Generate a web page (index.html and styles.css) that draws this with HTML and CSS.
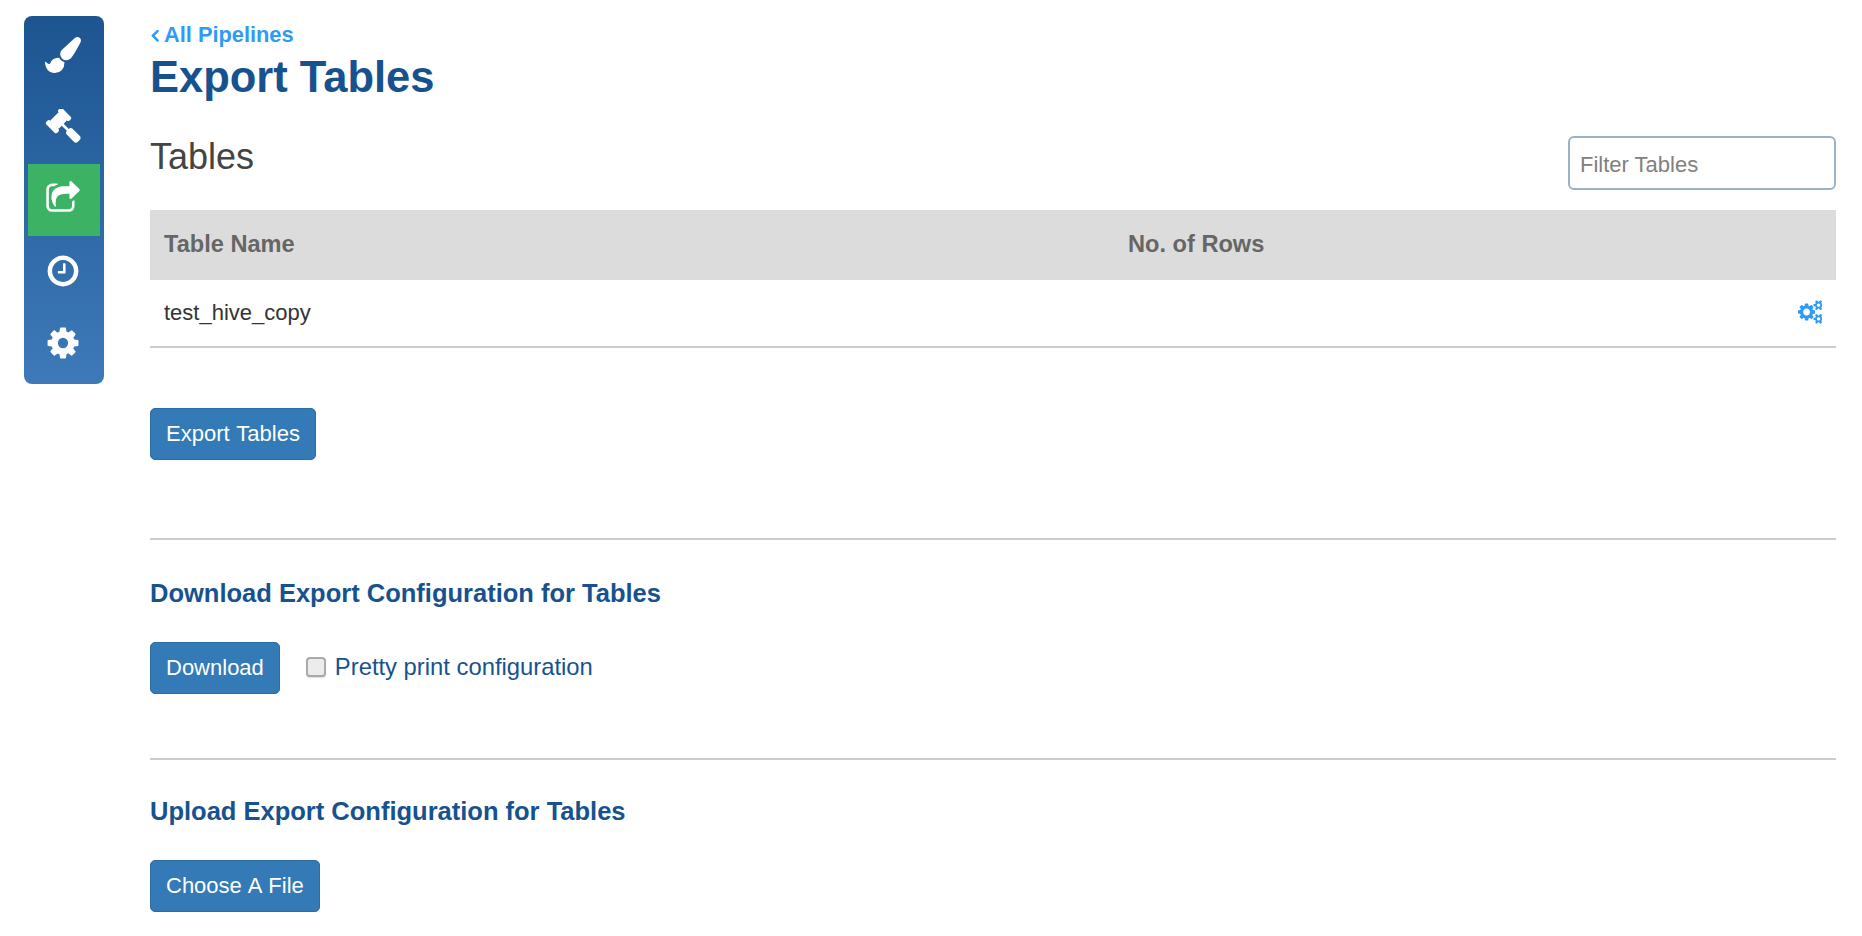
FILE: index.html
```html
<!DOCTYPE html>
<html lang="en">
<head>
    <meta charset="UTF-8">
    <title>Export Tables</title>
    <link rel="stylesheet" href="styles.css">
</head>
<body>
    <!-- Side navigation -->
    <nav class="sidebar">
        <a class="side-item" href="#"><svg class="side-icon" viewBox="0 0 1792 1792"><path d="M1615 0q70 0 122.5 46.5t52.5 116.5q0 63-45 151-332 629-465 752-97 91-218 91-126 0-216.5-92.5t-90.5-219.5q0-128 92-212l638-579q59-54 130-54zm-909 1034q39 76 106.5 130t150.5 76l1 71q4 213-129.5 347t-348.5 134q-123 0-218-46.5t-152.5-127.5-86.5-183-29-220q7 5 41 30t62 44.5 59 36.5 46 17q41 0 55-37 25-66 57.5-112.5t69.5-76 88-47.5 103-25.5 125-10.5z"/></svg></a>
        <a class="side-item" href="#"><svg class="side-icon" viewBox="0 0 1792 1792"><path d="M1771 1440q0 53-37 90l-107 108q-39 37-91 37-53 0-90-37l-363-364q-38-36-38-90 0-53 43-96l-256-256-126 126q-14 14-34 14t-34-14q2 2 12.5 12t12.5 13 10 11.5 10 13.5 6 13.5 5.5 16.5 1.5 18q0 38-28 68-3 3-16.5 18t-19 20.5-18.5 16.5-22 15.5-22 9-26 4.5q-40 0-68-28l-408-408q-28-28-28-68 0-13 4.5-26t9-22 15.5-22 16.5-18.5 20.5-19 18-16.5q30-28 68-28 10 0 18 1.5t16.5 5.5 13.5 6 13.5 10 11.5 10 13 12.5 12 12.5q-14-14-14-34t14-34l348-348q14-14 34-14t34 14q-2-2-12.5-12t-12.5-13-10-11.5-10-13.5-6-13.5-5.5-16.5-1.5-18q0-38 28-68 3-3 16.5-18t19-20.5 18.5-16.5 22-15.5 22-9 26-4.5q40 0 68 28l408 408q28 28 28 68 0 13-4.5 26t-9 22-15.5 22-16.5 18.5-20.5 19-18 16.5q-30 28-68 28-10 0-18-1.5t-16.5-5.5-13.5-6-13.5-10-11.5-10-13-12.5-12-12.5q14 14 14 34t-14 34l-126 126 256 256q43-43 96-43 52 0 91 37l363 363q37 39 37 91z"/></svg></a>
        <a class="side-item active" href="#"><svg class="side-icon" viewBox="0 0 1792 1792"><path d="M1472 989v259q0 119-84.5 203.5t-203.5 84.5h-832q-119 0-203.5-84.5t-84.5-203.5v-832q0-119 84.5-203.5t203.5-84.5h255q13 0 22.5 9.5t9.5 22.5q0 27-26 32-77 26-133 60-10 4-16 4h-112q-66 0-113 47t-47 113v832q0 66 47 113t113 47h832q66 0 113-47t47-113v-214q0-19 18-29 28-13 54-37 16-16 35-8 21 9 21 29zm237-496l-384 384q-18 19-45 19-12 0-25-5-39-17-39-59v-192h-160q-323 0-438 131-119 137-74 473 3 23-20 34-8 2-12 2-16 0-26-13-10-14-21-31t-39.5-68.5-49.5-99.5-38.5-114-17.5-122q0-49 3.5-91t14-90 28-88 47-81.5 68.5-74 94.5-61.5 124.5-48.5 159.5-30.5 196.5-11h160v-192q0-42 39-59 13-5 25-5 26 0 45 19l384 384q19 19 19 45t-19 45z"/></svg></a>
        <a class="side-item" href="#"><svg class="side-icon" viewBox="0 0 1792 1792"><path d="M1024 544v448q0 14-9 23t-23 9h-320q-14 0-23-9t-9-23v-64q0-14 9-23t23-9h224v-352q0-14 9-23t23-9h64q14 0 23 9t9 23zm416 352q0-148-73-273t-198-198-273-73-273 73-198 198-73 273 73 273 198 198 273 73 273-73 198-198 73-273zm224 0q0 209-103 385.5t-279.5 279.5-385.5 103-385.5-103-279.5-279.5-103-385.5 103-385.5 279.5-279.5 385.5-103 385.5 103 279.5 279.5 103 385.5z"/></svg></a>
        <a class="side-item" href="#"><svg class="side-icon" viewBox="0 0 1792 1792"><path d="M1152 896q0-106-75-181t-181-75-181 75-75 181 75 181 181 75 181-75 75-181zm512-109v222q0 12-8 23t-20 13l-185 28q-19 54-39 91 35 50 107 138 10 12 10 25t-9 23q-27 37-99 108t-94 71q-12 0-26-9l-138-108q-44 23-91 38-16 136-29 186-7 28-36 28h-222q-14 0-24.5-8.5t-11.5-21.5l-28-184q-49-16-90-37l-141 107q-10 9-25 9-14 0-25-11-126-114-165-168-7-10-7-23 0-12 8-23 15-21 51-66.5t54-70.5q-27-50-41-99l-183-27q-13-2-21-12.5t-8-23.5v-222q0-12 8-23t19-13l186-28q14-46 39-92-40-57-107-138-10-12-10-24 0-10 9-23 26-36 98.5-107.5t94.5-71.5q13 0 26 10l138 107q44-23 91-38 16-136 29-186 7-28 36-28h222q14 0 24.5 8.5t11.5 21.5l28 184q49 16 90 37l142-107q9-9 24-9 13 0 25 10 129 119 165 170 7 8 7 22 0 12-8 23-15 21-51 66.5t-54 70.5q26 50 41 98l183 28q13 2 21 12.5t8 23.5z"/></svg></a>
    </nav>

    <main class="content">
        <a class="back-link" href="#"><svg class="back-icon" viewBox="0 0 1792 1792"><path d="M1203 544q0 13-10 23l-393 393 393 393q10 10 10 23t-10 23l-50 50q-10 10-23 10t-23-10l-466-466q-10-10-10-23t10-23l466-466q10-10 23-10t23 10l50 50q10 10 10 23z"/></svg>All Pipelines</a>
        <h1 class="page-title">Export Tables</h1>

        <!-- Tables -->
        <div class="tables-head">
            <h2>Tables</h2>
            <input class="filter-input" type="text" placeholder="Filter Tables">
        </div>
        <div class="table-row table-header">
            <div class="col-name">Table Name</div>
            <div class="col-rows">No. of Rows</div>
        </div>
        <div class="table-row table-body">
            <div class="col-name">test_hive_copy</div>
            <div class="col-rows"></div>
            <svg class="row-icon" viewBox="0 0 1792 1792"><path d="M896 896q0-106-75-181t-181-75-181 75-75 181 75 181 181 75 181-75 75-181zm768 512q0-52-38-90t-90-38-90 38-38 90q0 53 37.5 90.5t90.5 37.5 90.5-37.5 37.5-90.5zm0-1024q0-52-38-90t-90-38-90 38-38 90q0 53 37.5 90.5t90.5 37.5 90.5-37.5 37.5-90.5zm-384 421v185q0 10-7 19.5t-16 10.5l-155 24q-11 35-32 76 34 48 90 115 7 11 7 20 0 12-7 19-23 30-82.5 89.5t-78.5 59.5q-11 0-21-7l-115-90q-37 19-77 31-11 108-23 155-7 24-30 24h-186q-11 0-20-7.5t-10-17.5l-23-153q-34-10-75-31l-118 89q-7 7-20 7-11 0-21-8-144-133-144-160 0-9 7-19 10-14 41-53t47-61q-23-44-35-82l-152-24q-10-1-17-9.5t-7-19.5v-185q0-10 7-19.5t16-10.5l155-24q11-35 32-76-34-48-90-115-7-11-7-20 0-12 7-20 22-30 82-89t79-59q11 0 21 7l115 90q34-18 77-32 11-108 23-154 7-24 30-24h186q11 0 20 7.5t10 17.5l23 153q34 10 75 31l118-89q8-7 20-7 11 0 21 8 144 133 144 160 0 8-7 19-12 16-42 54t-45 60q23 48 34 82l152 23q10 2 17 10.5t7 19.5zm640 533v140q0 16-149 31-12 27-30 52 51 113 51 138 0 4-4 7-122 71-124 71-8 0-46-47t-52-68q-20 2-30 2t-30-2q-14 21-52 68t-46 47q-2 0-124-71-4-3-4-7 0-25 51-138-18-25-30-52-149-15-149-31v-140q0-16 149-31 13-29 30-52-51-113-51-138 0-4 4-7 4-2 35-20t59-34 30-16q8 0 46 46.5t52 67.5q20-2 30-2t30 2q51-71 92-112l6-2q4 0 124 70 4 3 4 7 0 25-51 138 17 23 30 52 149 15 149 31zm0-1024v140q0 16-149 31-12 27-30 52 51 113 51 138 0 4-4 7-122 71-124 71-8 0-46-47t-52-68q-20 2-30 2t-30-2q-14 21-52 68t-46 47q-2 0-124-71-4-3-4-7 0-25 51-138-18-25-30-52-149-15-149-31v-140q0-16 149-31 13-29 30-52-51-113-51-138 0-4 4-7 4-2 35-20t59-34 30-16q8 0 46 46.5t52 67.5q20-2 30-2t30 2q51-71 92-112l6-2q4 0 124 70 4 3 4 7 0 25-51 138 17 23 30 52 149 15 149 31z"/></svg>
        </div>
        <div class="export-action">
            <button class="btn">Export Tables</button>
        </div>

        <!-- Download -->
        <section class="config-section">
            <h3>Download Export Configuration for Tables</h3>
            <div class="config-actions">
                <button class="btn">Download</button>
                <label class="pretty-label"><input type="checkbox">Pretty print configuration</label>
            </div>
        </section>

        <!-- Upload -->
        <section class="config-section">
            <h3>Upload Export Configuration for Tables</h3>
            <div class="config-actions">
                <button class="btn">Choose A File</button>
            </div>
        </section>
    </main>
</body>
</html>
```

FILE: styles.css
```css
* {
    margin: 0;
    padding: 0;
    box-sizing: border-box;
    font-family: "Liberation Sans", Arial, sans-serif;
}
body {
    display: flex;
    align-items: flex-start;
    background-color: #fff;
    color: #333;
}
/* Sidebar */
.sidebar {
    flex: none;
    width: 80px;
    height: 368px;
    margin: 16px 46px 0 24px;
    padding: 4px;
    border-radius: 8px;
    background: linear-gradient(to bottom, #1c5590, #3e79b9);
}
.side-item {
    display: flex;
    align-items: center;
    justify-content: center;
    height: 72px;
}
.side-item.active {
    background-color: #3cb264;
}
.side-icon {
    width: 36px;
    height: 36px;
    margin: 0 2px 2px 0;
    fill: #fff;
}
/* Main */
.content {
    flex: 1;
    min-width: 0;
    margin-right: 26px;
    padding-top: 23px;
}
.back-link {
    display: flex;
    align-items: center;
    height: 24px;
    color: #2e9bf5;
    font-size: 21.8px;
    font-weight: bold;
    text-decoration: none;
}
.back-icon {
    width: 20px;
    height: 20px;
    margin-left: -5px;
    margin-right: -1px;
    fill: #2e9bf5;
    stroke: #2e9bf5;
    stroke-width: 90;
}
.page-title {
    margin-top: 6px;
    color: #17528f;
    font-size: 43.5px;
    line-height: 48px;
    font-weight: bold;
}
.tables-head {
    display: flex;
    justify-content: space-between;
    align-items: flex-start;
    margin-top: 34px;
    height: 75px;
}
.tables-head h2 {
    margin-top: 2px;
    color: #444;
    font-size: 36px;
    line-height: 40px;
    font-weight: normal;
}
.filter-input {
    width: 268px;
    height: 54px;
    margin-top: 1px;
    padding: 3px 10px 0;
    border: 2px solid #9db1c6;
    border-radius: 6px;
    color: #333;
    font-size: 22px;
    outline: none;
}
.filter-input::placeholder {
    color: #808080;
}
.table-row {
    display: flex;
    align-items: center;
    padding: 0 14px;
}
.table-header {
    height: 70px;
    padding-bottom: 2px;
    background-color: #dcdcdc;
    color: #666;
    font-size: 23.6px;
    font-weight: bold;
}
.table-body {
    height: 68px;
    border-bottom: 2px solid #ccc;
    color: #333;
    font-size: 22px;
}
.col-name {
    width: 964px;
}
.col-rows {
    flex: 1;
}
.row-icon {
    width: 24px;
    height: 24px;
    margin-bottom: 2px;
    fill: #2e9bf5;
}
.export-action {
    padding: 60px 0 78px;
    border-bottom: 2px solid #ccc;
}
.btn {
    display: block;
    height: 52px;
    padding: 0 15px;
    border: 1px solid #2e6da4;
    border-radius: 5px;
    background-color: #337ab7;
    color: #fff;
    font-size: 22px;
    word-spacing: 1px;
}
/* Config sections */
.config-section {
    padding-top: 38px;
}
.config-section + .config-section {
    padding-top: 36px;
    border-top: 2px solid #ccc;
}
.config-section h3 {
    color: #17528f;
    font-size: 25.5px;
    line-height: 30px;
    font-weight: bold;
}
.config-actions {
    display: flex;
    align-items: center;
    gap: 26px;
    margin-top: 34px;
    padding-bottom: 64px;
}
.pretty-label {
    display: flex;
    align-items: center;
    gap: 9px;
    margin-bottom: 2px;
    color: #17528f;
    font-size: 23.8px;
}
.pretty-label input {
    appearance: none;
    width: 20px;
    height: 20px;
    border: 2px solid #aaa;
    border-radius: 4px;
    background-color: #ececec;
    box-shadow: 0 1px 1px #ddd;
}
```
